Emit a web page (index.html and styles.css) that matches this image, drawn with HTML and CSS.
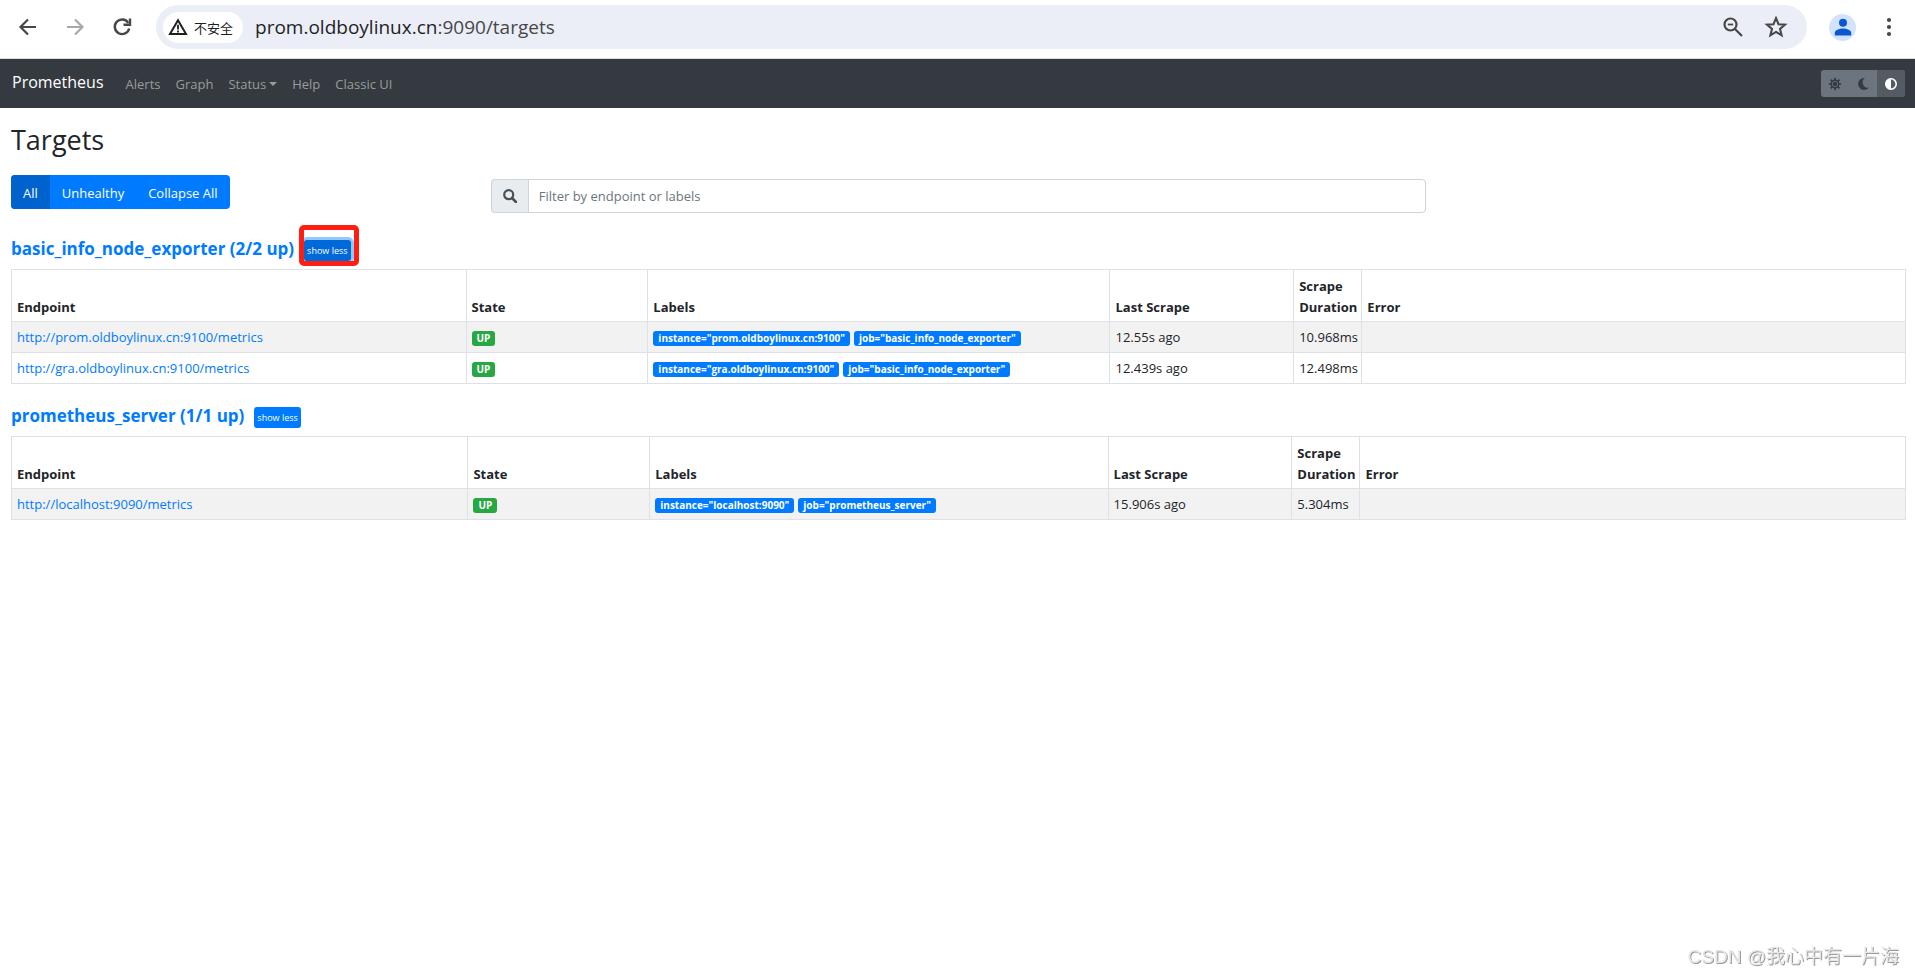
FILE: index.html
```html
<!DOCTYPE html>
<html lang="en">
<head>
<meta charset="utf-8">
<title>Prometheus Time Series Collection and Processing Server</title>
<link rel="stylesheet" href="styles.css">
</head>
<body>
<header class="browser">
  <div class="browser-nav">
    <button class="icon-btn" aria-label="Back"><svg width="24" height="24" viewBox="0 0 24 24" fill="none" stroke="#474747" stroke-width="2.2"><path d="M20 12H5M12 4.500L4.500 12l7.500 7.500"/></svg></button>
    <button class="icon-btn" aria-label="Forward"><svg width="24" height="24" viewBox="0 0 24 24" fill="none" stroke="#a9a9a9" stroke-width="2.200"><path d="M4 12h15M12 4.500l7.500 7.500-7.500 7.500"/></svg></button>
    <button class="icon-btn" aria-label="Reload"><svg width="24" height="24" viewBox="0 0 24 24" fill="none" stroke="#474747" stroke-width="2.400"><path d="M18.200 7.800A7.300 7.300 0 1 0 19.200 13.500"/><path d="M20 3.500v6.200h-6.500" /></svg></button>
  </div>
  <div class="omnibox">
    <button class="site-chip">
      <svg width="20" height="18" viewBox="0 0 20 18" fill="none" stroke="#1f1f1f" stroke-width="2"><path d="M10 2.200L18 16H2z"/><path d="M10 6.800v4.600M10 12.600v1.800" stroke-width="1.800"/></svg>
      <span>不安全</span>
    </button>
    <div class="url">prom.oldboylinux.cn<span class="url-rest">:9090/targets</span></div>
    <button class="icon-btn" aria-label="Zoom"><svg width="24" height="24" viewBox="0 0 24 24" fill="none" stroke="#474747" stroke-width="2.200"><circle cx="9.500" cy="9.500" r="6"/><path d="M14 14l7 7"/><path d="M6.800 9.500h5.400" stroke-width="1.800"/></svg></button>
    <button class="icon-btn" aria-label="Bookmark this tab"><svg width="24" height="24" viewBox="0 0 24 24" fill="none" stroke="#474747" stroke-width="2.100"><path d="M12 3.200l2.500 6 6.500.5-5 4.200 1.600 6.400L12 16.900l-5.600 3.400L8 13.900 3 9.700l6.500-.5z"/></svg></button>
  </div>
  <div class="browser-menu">
    <button class="avatar" aria-label="Profile"><svg width="18" height="18" viewBox="0 0 18 18" fill="#0b57d0"><circle cx="9" cy="4.800" r="4"/><path d="M.8 17.500v-2.300c0-3 4.500-4.600 8.200-4.600s8.200 1.600 8.200 4.600v2.300z"/></svg></button>
    <button class="icon-btn" aria-label="More"><svg width="24" height="24" viewBox="0 0 24 24" fill="#474747"><circle cx="12" cy="5" r="2.100"/><circle cx="12" cy="12" r="2.100"/><circle cx="12" cy="19" r="2.100"/></svg></button>
  </div>
</header>

<nav class="navbar">
  <a class="brand" href="#">Prometheus</a>
  <a class="nav-link" href="#">Alerts</a>
  <a class="nav-link" href="#">Graph</a>
  <a class="nav-link dropdown" href="#">Status</a>
  <a class="nav-link" href="#">Help</a>
  <a class="nav-link" href="#">Classic UI</a>
  <div class="theme-group">
    <button class="theme-btn" aria-label="Light theme"><svg width="14" height="14" viewBox="0 0 14 14" fill="none" stroke="#343a40"><circle cx="7" cy="7" r="3.700" stroke-width="1.500"/><circle cx="7" cy="7" r="2.200" fill="#343a40" stroke="none"/><path d="M7 .8v2.400M7 10.800v2.400M.8 7h2.400M10.800 7h2.400M2.600 2.600l1.700 1.700M9.700 9.700l1.700 1.700M2.600 11.400l1.700-1.700M9.700 4.300l1.700-1.700" stroke-width="1.700"/></svg></button>
    <button class="theme-btn" aria-label="Dark theme"><svg width="14" height="14" viewBox="0 0 14 14" fill="#343a40"><path d="M8.800 1A6 6 0 1 0 12.800 10.800 5.500 5.500 0 0 1 8.800 1z"/></svg></button>
    <button class="theme-btn active" aria-label="Browser theme"><svg width="14" height="14" viewBox="0 0 14 14"><circle cx="7" cy="7" r="5.200" fill="none" stroke="#fff" stroke-width="1.600"/><path d="M7 1.500a5.500 5.500 0 0 0 0 11z" fill="#fff"/></svg></button>
  </div>
</nav>

<main class="page">
  <h2 class="title">Targets</h2>
  <div class="toolbar">
    <div class="btn-group">
      <button class="btn active">All</button>
      <button class="btn">Unhealthy</button>
      <button class="btn">Collapse All</button>
    </div>
    <div class="search">
      <label class="search-icon" for="filter" aria-label="Filter"><svg width="14" height="14" viewBox="0 0 14 14" fill="none" stroke="#495057"><circle cx="5.700" cy="5.700" r="4.500" stroke-width="2.200"/><path d="M9 9l4 4" stroke-width="2.600" stroke-linecap="round"/></svg></label>
      <input class="search-input" id="filter" type="text" placeholder="Filter by endpoint or labels">
    </div>
  </div>

  <section class="pool">
    <h3 class="pool-head"><a href="#">basic_info_node_exporter (2/2 up)</a><span class="marked"><button class="toggle focused">show less</button></span></h3>
    <table class="targets">
      <colgroup><col class="c-endpoint"><col class="c-state"><col class="c-labels"><col class="c-last"><col class="c-duration"><col></colgroup>
      <thead><tr><th>Endpoint</th><th>State</th><th>Labels</th><th>Last Scrape</th><th>Scrape Duration</th><th>Error</th></tr></thead>
      <tbody>
        <tr><td><a href="#">http://prom.oldboylinux.cn:9100/metrics</a></td><td><span class="badge up">UP</span></td><td><span class="badge">instance="prom.oldboylinux.cn:9100"</span><span class="badge">job="basic_info_node_exporter"</span></td><td>12.55s ago</td><td>10.968ms</td><td></td></tr>
        <tr><td><a href="#">http://gra.oldboylinux.cn:9100/metrics</a></td><td><span class="badge up">UP</span></td><td><span class="badge">instance="gra.oldboylinux.cn:9100"</span><span class="badge">job="basic_info_node_exporter"</span></td><td>12.439s ago</td><td>12.498ms</td><td></td></tr>
      </tbody>
    </table>
  </section>

  <section class="pool">
    <h3 class="pool-head"><a href="#">prometheus_server (1/1 up)</a><button class="toggle">show less</button></h3>
    <table class="targets short">
      <colgroup><col class="c-endpoint"><col class="c-state"><col class="c-labels"><col class="c-last"><col class="c-duration"><col></colgroup>
      <thead><tr><th>Endpoint</th><th>State</th><th>Labels</th><th>Last Scrape</th><th>Scrape Duration</th><th>Error</th></tr></thead>
      <tbody>
        <tr><td><a href="#">http://localhost:9090/metrics</a></td><td><span class="badge up">UP</span></td><td><span class="badge">instance="localhost:9090"</span><span class="badge">job="prometheus_server"</span></td><td>15.906s ago</td><td>5.304ms</td><td></td></tr>
      </tbody>
    </table>
  </section>
</main>
<div class="watermark">CSDN @我心中有一片海</div>
</body>
</html>
```
FILE: styles.css
```css
* { box-sizing: border-box; }

body {
  margin: 0;
  min-height: 100vh;
  background: #fff;
  color: #212529;
  font: 13px/21px "Open Sans", "Noto Sans", "Noto Sans CJK SC", sans-serif;
}

a { color: #007bff; text-decoration: none; }
button { border: 0; padding: 0; background: none; color: inherit; font: inherit; }
svg { display: block; }

/* browser toolbar */
.browser {
  display: flex;
  align-items: center;
  height: 59px;
  padding: 0 14px 4px 16px;
  border-bottom: 1px solid #dcdcdc;
}
.browser-nav { display: flex; gap: 23px; }
.omnibox {
  flex: 1;
  display: flex;
  align-items: center;
  height: 44px;
  margin-left: 22px;
  padding: 0 19px 0 7px;
  border-radius: 22px;
  background: #ebeef7;
}
.omnibox .icon-btn + .icon-btn { margin-left: 19px; }
.site-chip {
  display: flex;
  align-items: center;
  gap: 6px;
  height: 31px;
  padding: 0 10px 0 5px;
  border-radius: 16px;
  background: #fff;
  color: #1f1f1f;
  font-family: "Noto Sans CJK SC", sans-serif;
}
.url { flex: 1; margin-left: 12px; color: #1f1f1f; font-size: 19px; }
.url-rest { color: #474747; }
.browser-menu { display: flex; align-items: center; gap: 21px; margin-left: 22px; }
.avatar {
  display: grid;
  place-items: center;
  width: 27px;
  height: 27px;
  border-radius: 50%;
  background: #d3e3fd;
}

/* navigation bar */
.navbar {
  display: flex;
  align-items: center;
  gap: 15px;
  height: 49px;
  padding: 0 10px 0 12px;
  background: #343a40;
}
.brand { margin: 0 7px 2px 0; color: #fff; font-size: 16px; }
.nav-link { padding-top: 1px; color: #999c9f; }
.dropdown::after {
  content: "";
  display: inline-block;
  margin-left: 3px;
  vertical-align: 3px;
  border: 4px solid transparent;
  border-top-color: currentColor;
  border-bottom: 0;
}
.theme-group {
  display: flex;
  margin-left: auto;
  border-radius: 3px;
  overflow: hidden;
  background: #6c757d;
}
.theme-btn { display: grid; place-items: center; width: 28px; height: 27px; }
.theme-btn.active { background: #545b62; }

/* page */
.page { padding: 13px 9px 0 11px; }
.title { margin: 0 0 16px; font-size: 27px; line-height: 38px; font-weight: 500; }
.toolbar {
  display: grid;
  grid-template-columns: 1fr 2fr 1fr;
  column-gap: 12px;
  align-items: start;
  margin-bottom: 4px;
}
.btn-group {
  display: flex;
  justify-self: start;
  border-radius: 4px;
  overflow: hidden;
  background: #007bff;
  color: #fff;
}
.btn { height: 34px; padding: 2px 12px 0; white-space: nowrap; }
.btn.active { background: #0062cc; }
.search { display: flex; height: 34px; margin-top: 4px; }
.search-icon {
  display: grid;
  place-items: center;
  width: 37px;
  border: 1px solid #ced4da;
  border-right: 0;
  border-radius: 4px 0 0 4px;
  background: #e9ecef;
}
.search-input {
  flex: 1;
  padding: 0 10px;
  border: 1px solid #ced4da;
  border-radius: 0 4px 4px 0;
  font: inherit;
}
.search-input::placeholder { color: #6c757d; opacity: 1; }

/* scrape pools */
.pool { padding-top: 20px; }
.pool-head {
  display: flex;
  align-items: flex-end;
  gap: 10px;
  margin: 0 0 8px;
  font-size: 17px;
  line-height: 24px;
}
.toggle {
  height: 21px;
  padding: 1px 3px 0;
  border-radius: 3px;
  background: #007bff;
  color: #fff;
  font-size: 9px;
  line-height: 20px;
  font-weight: 400;
}
.pool-head > * { flex: none; }
.toggle.focused { background: #0069d9; box-shadow: 0 0 0 3px #94c6ff; }
.marked { position: relative; display: flex; }
.marked::after {
  content: "";
  position: absolute;
  inset: -15px -8px -5px -5px;
  border: 5px solid #ff1f12;
  border-radius: 5px;
}

.targets { width: 100%; border-collapse: collapse; table-layout: fixed; }
.c-endpoint { width: 24%; }
.c-state { width: 9.6%; }
.c-labels { width: 24.4%; }
.c-last { width: 9.7%; }
.c-duration { width: 3.6%; }
.short .c-endpoint { width: 24.1%; }
.short .c-labels { width: 24.2%; }
.targets th, .targets td {
  padding: 4px 5px;
  border: 1px solid #dee2e6;
  text-align: left;
  vertical-align: bottom;
}
.targets th { padding: 6px 4px 3px 5px; }
.targets td { padding-right: 0; line-height: 22px; vertical-align: top; }
.targets tbody tr:nth-child(odd) { background: #f2f2f2; }
.badge {
  display: inline-block;
  margin-right: 4px;
  padding: 0 5px;
  border-radius: 3px;
  background: #007bff;
  color: #fff;
  font-size: 10px;
  line-height: 15px;
  font-weight: 700;
}
.badge.up { background: #28a745; }

.watermark {
  position: fixed;
  right: 16px;
  bottom: 6px;
  color: #e6e6e6;
  font: 19px/26px "Liberation Sans", "Noto Sans CJK SC", sans-serif;
  text-shadow: 1px 1px 0 #999;
}
```
